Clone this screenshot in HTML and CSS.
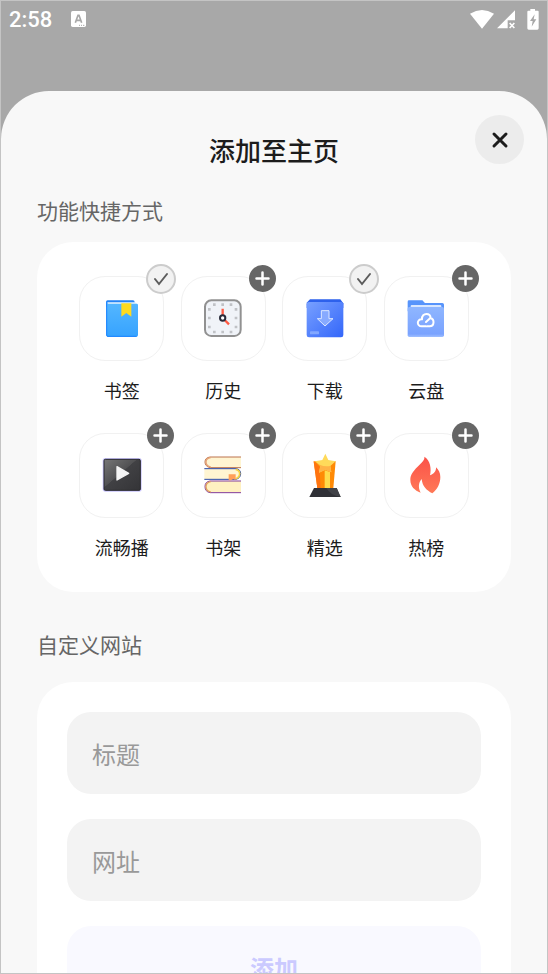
FILE: index.html
```html
<!doctype html>
<html lang="zh-CN">

<head>
    <meta charset="UTF-8">
    <meta name="viewport" content="width=device-width, initial-scale=1.0">
    <title>添加至主页</title>
    <link rel="stylesheet" href="styles.css">
</head>

<body>
    <div class="screen">
        <div class="status-bar">
            <span class="time">2:58</span>
            <svg class="status-app" width="15" height="16" viewBox="0 0 45 48">
                <rect width="45" height="48" rx="5" fill="#fff" />
                <path d="M13 35 21 13h3l8 22M16 28h13" fill="none" stroke="#a8a8a8" stroke-width="5" />
                <path d="M24 43h3m3 0h3m3 0h4" stroke="#a8a8a8" stroke-width="3" />
            </svg>
            <div class="status-right">
                <svg width="24" height="20" viewBox="0 0 72 60">
                    <path d="M0 14Q36-8 72 14L36 59Z" fill="#fff" />
                </svg>
                <svg width="18" height="20" viewBox="0 0 54 60">
                    <path d="M54 4v30H32v24H0Z" fill="#fff" />
                    <path d="m38 42 14 15m0-15L38 57" stroke="#fff" stroke-width="5" />
                </svg>
                <svg class="battery" width="12" height="21" viewBox="0 0 36 63">
                    <path d="M10 0h14v5h8q3 0 3 3v50q0 4-4 4H5q-4 0-4-4V8q0-3 3-3h6Z" fill="#fff" />
                    <path d="M23 16 9 36h8l-3 17 14-22h-8Z" fill="#a8a8a8" />
                </svg>
            </div>
        </div>

        <main class="sheet">
            <header class="sheet-header">
                <h1>添加至主页</h1>
                <button type="button" class="close-btn" aria-label="关闭">
                    <svg width="18" height="18" viewBox="0 0 18 18">
                        <path d="m3 3 12 12M15 3 3 15" stroke="#1c1c1c" stroke-width="3" stroke-linecap="round" />
                    </svg>
                </button>
            </header>

            <section class="section">
                <h2>功能快捷方式</h2>
                <div class="card shortcuts">
                    <button type="button" class="shortcut" aria-pressed="true">
                        <span class="tile">
                            <svg class="icon" viewBox="-6 -6 138 138">
                                <defs>
                                    <linearGradient id="book" x2="0" y2="1">
                                        <stop stop-color="#55b7ff" />
                                        <stop offset="1" stop-color="#36a3ff" />
                                    </linearGradient>
                                </defs>
                                <path d="M20 7h76q5 0 5 6v14H16V11q0-4 4-4Z" fill="#2383f5" />
                                <path d="M19 13h84l4 4v8H19Z" fill="#e4f3ff" />
                                <path d="M16 12q1 5 6 5h85q4 0 4 4v90q0 5-5 5H20q-4 0-4-4Z" fill="url(#book)" />
                                <path d="M17 10v102q0 3 4 3h86" fill="none" stroke="#1681ff" stroke-width="3" />
                                <path d="M61 16h30v40L76 45 61 56Z" fill="#ffda1f" />
                            </svg>
                            <span class="badge checked">
                                <svg width="16" height="16" viewBox="0 0 16 16">
                                    <path d="m2 8 4 5 8-10" />
                                </svg>
                            </span>
                        </span>
                        <span class="name">书签</span>
                    </button>
                    <button type="button" class="shortcut" aria-pressed="false">
                        <span class="tile">
                            <svg class="icon" viewBox="-6 -6 138 138">
                                <rect x="9" y="7" width="107" height="107" rx="19" fill="#f0f3f8" stroke="#919191" stroke-width="6" />
                                <path d="M33 20h8m17 0h8m17 0h8M33 102h8m17 0h8m17 0h8M18 34h8m-8 26h8m-8 27h8M98 34h8m-8 26h8m-8 27h8" stroke="#c0c2c6" stroke-width="8" />
                                <path d="M62 32v20M68 66l13 13" stroke="#ff5a43" stroke-width="7" />
                                <circle cx="62" cy="60" r="8" fill="#fff" stroke="#292b3a" stroke-width="6" />
                            </svg>
                            <span class="badge">
                                <svg width="15" height="15" viewBox="0 0 30 30">
                                    <path d="M15 3v24M3 15h24" />
                                </svg>
                            </span>
                        </span>
                        <span class="name">历史</span>
                    </button>
                    <button type="button" class="shortcut" aria-pressed="true">
                        <span class="tile">
                            <svg class="icon" viewBox="-6 -6 138 138">
                                <defs>
                                    <linearGradient id="down" x2="1" y2="1">
                                        <stop stop-color="#78a0ff" />
                                        <stop offset="1" stop-color="#3366fa" />
                                    </linearGradient>
                                </defs>
                                <path d="M18 4h91l9 12v14H8V14Z" fill="#2d61ec" />
                                <rect x="8" y="12" width="110" height="106" rx="7" fill="url(#down)" />
                                <path d="M52 38h23v24h12L63 84 40 62h12Z" fill="#87aaff" stroke="#dce8ff" stroke-width="3" />
                                <rect x="18" y="100" width="27" height="9" rx="2" fill="#82a7ff" />
                            </svg>
                            <span class="badge checked">
                                <svg width="16" height="16" viewBox="0 0 16 16">
                                    <path d="m2 8 4 5 8-10" />
                                </svg>
                            </span>
                        </span>
                        <span class="name">下载</span>
                    </button>
                    <button type="button" class="shortcut" aria-pressed="false">
                        <span class="tile">
                            <svg class="icon" viewBox="-6 -6 138 138">
                                <defs>
                                    <linearGradient id="folder" x2="0" y2="1">
                                        <stop stop-color="#8fb6ff" />
                                        <stop offset=".9" stop-color="#7aa3ff" />
                                        <stop offset="1" stop-color="#a0bfff" />
                                    </linearGradient>
                                </defs>
                                <path d="M12 7h38q4 0 6 4l4 4h52q5 0 5 5v20H8V11q0-4 4-4Z" fill="#5794fb" />
                                <rect x="17" y="21" width="92" height="15" rx="3" fill="#d9e7ff" />
                                <rect x="8" y="27" width="109" height="90" rx="5" fill="url(#folder)" />
                                <path d="M63 85H50c-16 0-15-23 1-21-2-22 29-20 25-4 14 4 12 25-2 25h-7M63 72l13-12" fill="none" stroke="#fff" stroke-width="6" stroke-linecap="round" stroke-linejoin="round" />
                            </svg>
                            <span class="badge">
                                <svg width="15" height="15" viewBox="0 0 30 30">
                                    <path d="M15 3v24M3 15h24" />
                                </svg>
                            </span>
                        </span>
                        <span class="name">云盘</span>
                    </button>
                    <button type="button" class="shortcut" aria-pressed="false">
                        <span class="tile">
                            <svg class="icon" viewBox="-6 -6 138 138">
                                <defs>
                                    <linearGradient id="video" x2="1" y2="1">
                                        <stop stop-color="#777" />
                                        <stop offset=".45" stop-color="#515153" />
                                        <stop offset=".46" stop-color="#414144" />
                                        <stop offset="1" stop-color="#343437" />
                                    </linearGradient>
                                </defs>
                                <rect x="5" y="9" width="117" height="101" rx="8" fill="#c8c3fb" />
                                <rect x="9" y="13" width="109" height="93" rx="4" fill="url(#video)" stroke="#29292e" stroke-width="3" />
                                <path d="M48 35v40l35-20Z" fill="#f4f4f4" stroke="#f4f4f4" stroke-width="4" stroke-linejoin="round" />
                            </svg>
                            <span class="badge">
                                <svg width="15" height="15" viewBox="0 0 30 30">
                                    <path d="M15 3v24M3 15h24" />
                                </svg>
                            </span>
                        </span>
                        <span class="name">流畅播</span>
                    </button>
                    <button type="button" class="shortcut" aria-pressed="false">
                        <span class="tile">
                            <svg class="icon" viewBox="-6 -6 138 138">
                                <g stroke-width="3">
                                    <path d="M117 6H24Q9 8 9 21t15 17h93" fill="#fff5d2" stroke="#bc734c" />
                                    <path d="M7 41h95q14 2 14 15t-14 17H7" fill="#fff5d2" stroke="#2b4aa5" />
                                    <path d="M117 78H24Q9 80 9 95t15 18h93" fill="#fff1c1" stroke="#823c9c" />
                                </g>
                                <path d="M26 8Q12 10 12 21t14 15" fill="none" stroke="#e6a277" stroke-width="4" />
                                <path d="M101 43q12 3 12 13t-12 15" fill="none" stroke="#f5d245" stroke-width="5" />
                                <path d="M26 80Q12 83 12 95t14 16" fill="none" stroke="#e1a05e" stroke-width="4" />
                                <path d="M80 58h21v18l-7-4-7 4h-7Z" fill="#ff9f58" />
                            </svg>
                            <span class="badge">
                                <svg width="15" height="15" viewBox="0 0 30 30">
                                    <path d="M15 3v24M3 15h24" />
                                </svg>
                            </span>
                        </span>
                        <span class="name">书架</span>
                    </button>
                    <button type="button" class="shortcut" aria-pressed="false">
                        <span class="tile">
                            <svg class="icon" viewBox="-6 -6 138 138">
                                <path d="M29 19h66l-7 80H40Z" fill="#ff8a05" />
                                <path d="M29 19 46 35l4 64H40Z" fill="#ff7410" />
                                <path d="M62 46l16 5v48H62Z" fill="#ffdb4b" />
                                <path d="m64-4 9 19 22 4-16 14 3 19-18-8-19 9 4-20-16-14 22-4Z" fill="#ffda5a" />
                                <path d="M34 19q16 19 45 14l3 19-18-8-19 9 4-20Z" fill="#ffb347" />
                                <path d="M30 99h68l12 27H16Z" fill="#303137" />
                                <path d="M67 99h31l12 27q-31-5-43-27Z" fill="#414248" />
                            </svg>
                            <span class="badge">
                                <svg width="15" height="15" viewBox="0 0 30 30">
                                    <path d="M15 3v24M3 15h24" />
                                </svg>
                            </span>
                        </span>
                        <span class="name">精选</span>
                    </button>
                    <button type="button" class="shortcut" aria-pressed="false">
                        <span class="tile">
                            <svg class="icon" viewBox="-6 -6 138 138">
                                <defs>
                                    <linearGradient id="fire" x2="0" y2="1">
                                        <stop stop-color="#fb5148" />
                                        <stop offset="1" stop-color="#ff7957" />
                                    </linearGradient>
                                </defs>
                                <path d="M58 5c2 10-8 18-21 31C24 49 16 60 16 74c0 20 13 32 31 39-8-15-7-29 3-41 2 22 15 34 32 43 15-12 24-29 24-49 0-12-5-22-13-29 1 12-7 20-18 24C80 42 76 16 58 5Z" fill="url(#fire)" />
                            </svg>
                            <span class="badge">
                                <svg width="15" height="15" viewBox="0 0 30 30">
                                    <path d="M15 3v24M3 15h24" />
                                </svg>
                            </span>
                        </span>
                        <span class="name">热榜</span>
                    </button>
                </div>
            </section>

            <section class="section custom">
                <h2>自定义网站</h2>
                <form class="card site-form">
                    <input type="text" name="title" placeholder="标题" aria-label="标题">
                    <input type="text" name="url" inputmode="url" placeholder="网址" aria-label="网址">
                    <button type="submit" class="add-btn" disabled>添加</button>
                </form>
            </section>
        </main>
    </div>
</body>

</html>
```

FILE: styles.css
```css
* {
    box-sizing: border-box;
}

body {
    margin: 0;
    font-family: "Noto Sans CJK SC", sans-serif;
    color: #1c1c1c;
}

button,
input {
    font-family: inherit;
    border: none;
}

svg {
    display: block;
    flex: none;
}

.screen {
    height: 100vh;
    overflow: hidden;
    display: flex;
    flex-direction: column;
    background: #a8a8a8;
    border: 1px solid #c4c4c4;
}

.status-bar {
    flex: none;
    display: flex;
    align-items: center;
    height: 36px;
    padding: 0 8px;
    color: #fff;
}

.time {
    font-family: Roboto, sans-serif;
    font-size: 22px;
    font-weight: 500;
}

.status-app {
    margin-left: 19px;
}

.status-right {
    display: flex;
    align-items: center;
    gap: 3px;
    margin-left: auto;
}

.battery {
    margin-left: 9px;
}

.sheet {
    flex: 1 0 auto;
    margin-top: 54px;
    padding-bottom: 36px;
    background: #f8f8f8;
    border-radius: 48px 48px 0 0;
}

.sheet-header {
    display: grid;
    grid-template-columns: 1fr auto 1fr;
    align-items: start;
    padding: 24px 23px 0;
}

.sheet-header h1 {
    grid-column: 2;
    margin: 17px 0 0;
    font-size: 26px;
    line-height: 36px;
    font-weight: 500;
}

.close-btn {
    justify-self: end;
    display: flex;
    align-items: center;
    justify-content: center;
    width: 49px;
    height: 49px;
    padding: 0;
    border-radius: 50%;
    background: #ececec;
    cursor: pointer;
}

.section {
    padding: 27px 36px 0;
}

.section h2 {
    margin: 0 0 17px;
    font-size: 21px;
    line-height: 30px;
    font-weight: 400;
    color: #666;
}

.section.custom {
    padding-top: 37px;
}

.custom h2 {
    margin-bottom: 23px;
}

.card {
    background: #fff;
    border-radius: 36px;
}

.shortcuts {
    display: grid;
    grid-template-columns: repeat(4, 1fr);
    row-gap: 31px;
    padding: 34px 34px 33px;
}

.shortcut {
    display: flex;
    flex-direction: column;
    align-items: center;
    gap: 17px;
    padding: 0;
    background: none;
    color: inherit;
    cursor: pointer;
}

.tile {
    position: relative;
    display: flex;
    align-items: center;
    justify-content: center;
    width: 85px;
    height: 85px;
    border: 1px solid #f1f1f1;
    border-radius: 26px;
}

.icon {
    width: 46px;
    height: 46px;
}

.badge {
    position: absolute;
    top: -12px;
    right: -11px;
    display: flex;
    align-items: center;
    justify-content: center;
    width: 27px;
    height: 27px;
    border-radius: 50%;
    background: #666;
}

.badge path {
    fill: none;
    stroke: #fff;
    stroke-width: 5;
    stroke-linecap: round;
}

.badge.checked {
    top: -13px;
    right: -13px;
    width: 30px;
    height: 30px;
    background: #f2f2f2;
    border: 2px solid #ccc;
}

.badge.checked path {
    stroke: #5c5c5c;
    stroke-width: 2;
}

.name {
    font-size: 18px;
    line-height: 24px;
}

.site-form {
    display: flex;
    flex-direction: column;
    gap: 25px;
    padding: 30px;
}

.site-form input,
.add-btn {
    width: 100%;
    height: 82px;
    padding: 0 25px;
    border-radius: 24px;
    font-size: 24px;
}

.site-form input {
    background: #f3f3f3;
    color: #1c1c1c;
}

.site-form input::placeholder {
    color: #999;
}

.add-btn {
    background: #f9f9ff;
    color: #cbcaff;
    font-weight: 700;
}
```
